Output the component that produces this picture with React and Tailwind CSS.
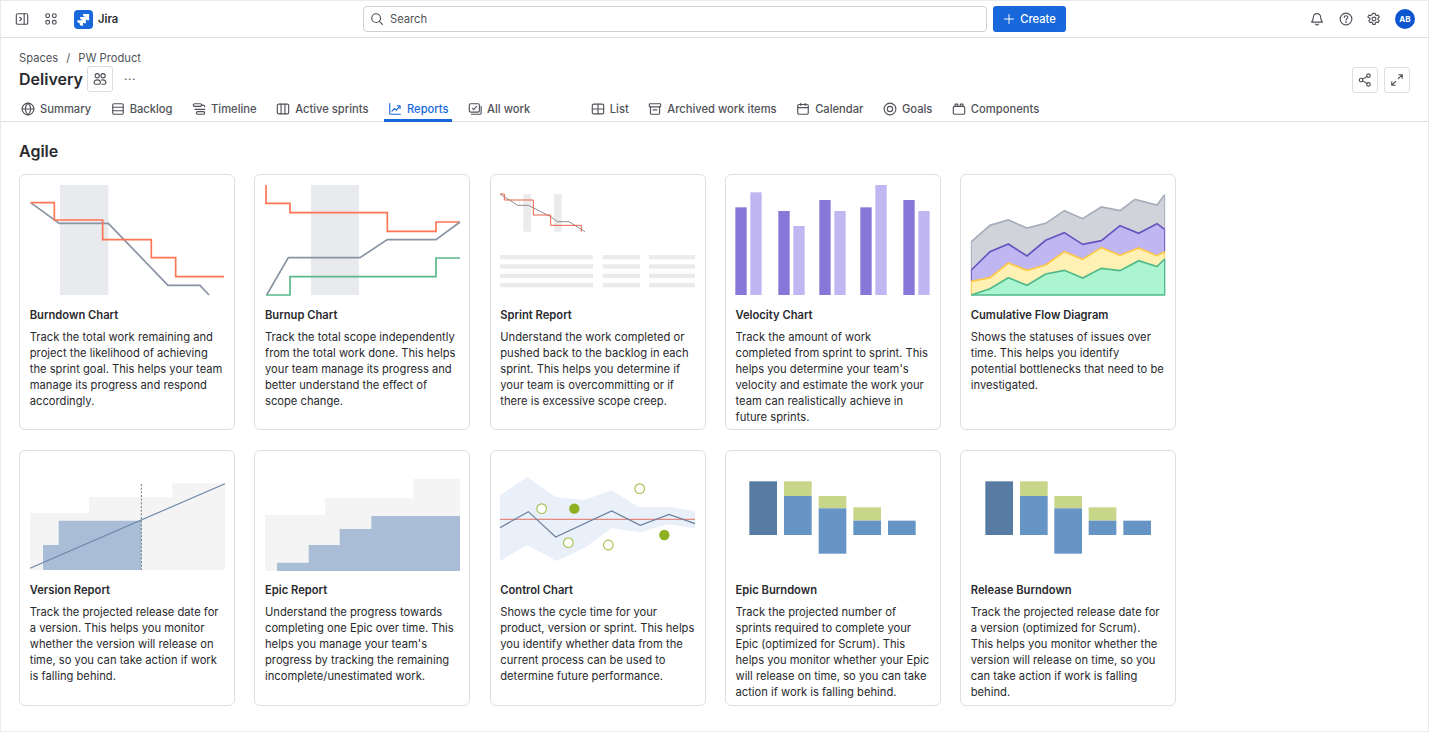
import React from "react";

const Ic = ({ children, size = 16, className = "" }) => (
  <svg width={size} height={size} viewBox="0 0 16 16" fill="none" stroke="currentColor" strokeWidth="1.3" strokeLinecap="round" strokeLinejoin="round" className={"shrink-0 " + className}>{children}</svg>
);

const icons = {
  panel: <><rect x="1.5" y="2" width="13" height="12" rx="1.5" /><path d="M10.5 2v12M5.5 6l2 2-2 2" /></>,
  apps: <><circle cx="4.2" cy="4.2" r="2.2" /><circle cx="11.8" cy="4.2" r="2.2" /><circle cx="4.2" cy="11.8" r="2.2" /><circle cx="11.8" cy="11.8" r="2.2" /></>,
  search: <><circle cx="7" cy="7" r="5" /><path d="M10.7 10.7 14.2 14.2" /></>,
  plus: <path d="M8 2v12M2 8h12" />,
  bell: <><path d="M8 1.8c-2.6 0-4.2 2-4.2 4.5 0 3-1.5 4.2-2 5.2h12.4c-.5-1-2-2.2-2-5.2 0-2.5-1.6-4.5-4.2-4.5z" /><path d="M6.3 13.8c.4.6 1 .9 1.7.9s1.3-.3 1.7-.9" /></>,
  help: <><circle cx="8" cy="8" r="6.7" /><path d="M6 6.2c0-1.1.9-1.9 2-1.9s2 .8 2 1.8c0 1.500-2 1.700-2 3.200" /><circle cx="8" cy="11.5" r=".4" /></>,
  gear: <><circle cx="8" cy="8" r="2.200" /><path d="M6.700 1.500h2.600l.4 1.900 1.200.7 1.800-.6 1.300 2.300-1.400 1.300v1.400l1.400 1.300-1.300 2.300-1.800-.6-1.200.7-.4 1.900H6.700l-.4-1.900-1.200-.7-1.800.6-1.300-2.300 1.400-1.300V7.100L1 5.800l1.300-2.300 1.800.6 1.200-.7z" /></>,
  users: <><circle cx="4.800" cy="4.300" r="2.400" /><circle cx="11.500" cy="4.300" r="2.400" /><path d="M1.300 12.500c0-2 1.500-3.500 3.700-3.500s3.500 1.500 3.500 3.300c0 1-.7 1.700-1.700 1.700H3c-1 0-1.700-.5-1.700-1.500z" /><path d="M9.800 9.200c.5-.2 1-.2 1.500-.2 2 0 3.400 1.400 3.400 3.400 0 1-.7 1.600-1.600 1.600h-3" /></>,
  share: <><circle cx="3.500" cy="8" r="2" /><circle cx="12" cy="3" r="2" /><circle cx="12" cy="13" r="2" /><path d="M5.300 7 10.200 4M5.300 9 10.200 12" /></>,
  expand: <path d="M9.500 6.500 14 2M10 2h4v4M6.500 9.500 2 14M2 10v4h4" />,
  globe: <><circle cx="8" cy="8" r="6.700" /><path d="M1.300 8h13.400" /><path d="M8 1.300c-4 3.800-4 9.600 0 13.400 4-3.800 4-9.600 0-13.400z" /></>,
  backlog: <><rect x="2" y="2" width="12" height="12" rx="1.500" /><path d="M2 6h12M2 10h12" /></>,
  timeline: <><rect x="1.500" y="2" width="9.500" height="3" rx="1.500" /><path d="M11 3.500h1.500c1.300 0 2 .8 2 1.900" /><rect x="5" y="11" width="9.500" height="3" rx="1.500" /><path d="M14.500 8.500H3.500" /></>,
  board: <><rect x="1.500" y="2.500" width="13" height="11" rx="1.500" /><path d="M5.800 2.500v11M10.200 2.500v11" /></>,
  chart: <><path d="M2 1.800V13c0 .6.400 1 1 1h11.200" /><path d="M4.500 10.500 7.300 7.500 9.500 9.300l4-4.500" /><path d="M10.600 4.300h3.200v3" /></>,
  allwork: <><rect x="1.500" y="2" width="11.500" height="9.500" rx="1.500" /><path d="M15 5v7.500c0 .8-.7 1.500-1.500 1.500H4" /><path d="m5 7.300 1.500 1.500L9.800 5" /></>,
  list: <><rect x="1.500" y="2.500" width="13" height="11" rx="1.500" /><path d="M1.500 8h13M8 2.500v11" /></>,
  archive: <><rect x="1.500" y="2" width="13" height="3.500" rx=".8" /><path d="M2.800 5.500V13c0 .6.400 1 1 1h8.400c.6 0 1-.4 1-1V5.500M6 9h4" /></>,
  calendar: <><rect x="2" y="2.800" width="12" height="11.200" rx="1.500" /><path d="M2 6.500h12M5.500 1.500v2.500M10.500 1.500v2.500" /></>,
  goals: <><circle cx="8" cy="8" r="6.700" /><circle cx="8" cy="8" r="3" /></>,
  components: <><rect x="1.500" y="5" width="13" height="9" rx="1.500" /><path d="M3.500 5V2.500h3V5M9.500 5V2.500h3V5" /></>,
};

const I = ({ n, size, className }) => <Ic size={size} className={className}>{icons[n]}</Ic>;

const Tab = ({ icon, label, active, className = "" }) => (
  <div className={"relative flex items-center gap-1 px-[3px] h-[26px] text-[11.2px] font-medium " + (active ? "text-[#1868db] " : "text-[#505258] ") + className}>
    <I n={icon} size={14} className="mx-px" />
    <span>{label}</span>
    {active && <div className="absolute left-0 right-0 bottom-0 h-[3px] bg-[#1868db]" />}
  </div>
);

const Chart = ({ x, y, h = 132, children }) => (
  <svg className="block w-full" style={{ height: h }} viewBox={`${x + 3} ${y + 3} 642 ${h * 3}`} fill="none">{children}</svg>
);

const P = ({ c, w = 5, p }) => <polyline points={p} stroke={c} strokeWidth={w} fill="none" />;
const R = ({ a, b, c, d, f, s }) => <rect x={a} y={b} width={c - a} height={d - b} fill={f} stroke={s} strokeWidth={s ? 2 : 0} />;

const OR = "#ff7452", GR = "#8993a4", GN = "#57b88a";

const Burndown = () => (
  <Chart x={27} y={12}>
    <R a={150} b={45} c={295} d={375} f="#e9eaee" />
    <P c={GR} p="62,98 148,160 295,160 474,346 570,346 597,375" />
    <P c={OR} p="62,98 133,98 133,150 278,150 278,209 424,209 424,263 497,263 497,320 642,320" />
  </Chart>
);
const Burnup = () => (
  <Chart x={732} y={12}>
    <R a={903} b={45} c={1047} d={375} f="#e9eaee" />
    <P c={OR} p="768,45 768,100 840,100 840,128 1132,128 1132,184 1278,184 1278,156 1350,156" />
    <P c={GR} p="770,375 835,263 1050,263 1132,209 1278,209 1350,156" />
    <P c={GN} p="768,375 840,375 840,320 1278,320 1278,264 1350,264" />
  </Chart>
);
const Sprint = () => (
  <Chart x={15} y={12}>
    <R a={115} b={72} c={138} d={185} f="#ebebeb" />
    <R a={207} b={72} c={230} d={185} f="#ebebeb" />
    <P c="#8c8c8c" w={3} p="45,72 98,106 130,106 197,140 217,155 252,155 300,185" />
    <P c="#e8604a" w={3} p="45,72 58,72 58,90 145,90 145,135 197,135 197,166 289,166 289,185" />
    {[255, 283, 311, 339].map((y) => (
      <g key={y}>
        <R a={45} b={y} c={324} d={y + 13} f="#ebebeb" />
        <R a={353} b={y} c={465} d={y + 13} f="#ebebeb" />
        <R a={492} b={y} c={630} d={y + 13} f="#ebebeb" />
      </g>
    ))}
  </Chart>
);
const Velocity = () => (
  <Chart x={15} y={12}>
    {[[46, 112, 1], [91, 67, 0], [175, 123, 1], [220, 168, 0], [298, 90, 1], [343, 123, 0], [421, 112, 1], [466, 45, 0], [550, 90, 1], [595, 123, 0]].map(([a, b, d]) => (
      <R key={a} a={a} b={b} c={a + 34} d={375} f={d ? "#8777d9" : "#c0b6f2"} />
    ))}
  </Chart>
);
const Area = ({ top, f, s }) => (
  <>
    <polygon points={`${top} 629,375 49,375`} fill={f} />
    <polyline points={top} stroke={s} strokeWidth="5" fill="none" />
  </>
);
const Cfd = () => (
  <Chart x={15} y={12}>
    <Area top="49,215 105,166 160,150 216,174 272,160 328,122 383,146 439,111 495,122 540,88 606,105 629,74" f="#d0d3da" s="#a5adba" />
    <polyline points="49,215 49,300" stroke="#a5adba" strokeWidth="3" />
    <polyline points="629,74 629,178" stroke="#a5adba" strokeWidth="3" />
    <Area top="49,300 105,245 160,222 216,258 272,211 328,188 383,223 439,212 495,167 551,190 606,161 629,178" f="#c0b6f2" s="#6554c0" />
    <polyline points="49,300 49,334" stroke="#6554c0" strokeWidth="3" />
    <polyline points="629,178 629,245" stroke="#6554c0" strokeWidth="3" />
    <Area top="49,334 105,323 160,279 216,301 272,285 328,245 383,268 439,233 495,256 551,234 606,257 629,245" f="#fff0b3" s="#ffc847" />
    <polyline points="49,334 49,375" stroke="#ffc847" strokeWidth="3" />
    <polyline points="629,245 629,267" stroke="#ffc847" strokeWidth="3" />
    <Area top="49,375 105,356 160,323 216,346 272,312 328,301 383,324 439,295 495,302 551,272 606,290 629,267" f="#abf5d1" s="#4fb98a" />
    <polyline points="629,267 629,375 49,375" stroke="#4fb98a" strokeWidth="4" />
  </Chart>
);
const Version = () => (
  <Chart x={27} y={-30} h={131}>
    <polygon points="60,330 60,159 237,159 237,111 487,111 487,70 645,70 645,330" fill="#f4f4f4" />
    <polygon points="99,330 99,255 146,255 146,182 394,182 394,330" fill="#a9bdd6" />
    <line x1="394" y1="72" x2="394" y2="330" stroke="#6f7680" strokeWidth="3" strokeDasharray="6 5" />
    <line x1="60" y1="325" x2="645" y2="71" stroke="#6c87a8" strokeWidth="3.500" />
  </Chart>
);
const EpicReport = () => (
  <Chart x={732} y={-30} h={131}>
    <polygon points="765,333 765,165 945,165 945,115 1210,115 1210,57 1350,57 1350,333" fill="#f4f4f4" />
    <polygon points="801,333 801,308 896,308 896,255 989,255 989,207 1084,207 1084,168 1350,168 1350,333" fill="#a9bdd6" />
  </Chart>
);
const Control = () => (
  <Chart x={15} y={-45} h={131}>
    <polygon points="45,90 127,36 212,96 297,105 380,76 460,126 550,126 630,138 630,190 550,178 466,202 380,190 297,250 215,288 127,240 45,288" fill="#e9f0f9" />
    <line x1="45" y1="163" x2="630" y2="163" stroke="#e58a80" strokeWidth="3.500" />
    <P c="#6c7f9c" w={3.500} p="45,188 130,140 212,216 380,138 466,181 552,148 630,176" />
    {[[170, 131], [250, 233], [370, 240], [464, 71]].map(([x, y]) => (
      <circle key={x} cx={x} cy={y} r="14.500" fill="#fff" stroke="#a7c254" strokeWidth="3.500" />
    ))}
    <circle cx="268" cy="131" r="15.500" fill="#8eb021" />
    <circle cx="538" cy="210" r="15.500" fill="#8eb021" />
  </Chart>
);
const Bars = ({ x, y, xs }) => {
  const [a, b, c, d, e] = xs;
  const w = 83;
  const G = "#c8d68a", B = "#6594c5";
  return (
    <Chart x={x} y={y} h={131}>
      <R a={a} b={49} c={a + w} d={210} f="#587ba3" />
      <R a={b} b={49} c={b + w} d={93} f={G} />
      <R a={b} b={93} c={b + w} d={210} f={B} />
      <R a={c} b={93} c={c + w} d={130} f={G} />
      <R a={c} b={130} c={c + w} d={266} f={B} />
      <R a={d} b={127} c={d + w} d={167} f={G} />
      <R a={d} b={167} c={d + w} d={210} f={B} />
      <R a={e} b={167} c={e + w} d={210} f={B} />
    </Chart>
  );
};

const row1 = [
  { c: <Burndown />, t: "Burndown Chart", d: "Track the total work remaining and project the likelihood of achieving the sprint goal. This helps your team manage its progress and respond accordingly." },
  { c: <Burnup />, t: "Burnup Chart", d: "Track the total scope independently from the total work done. This helps your team manage its progress and better understand the effect of scope change." },
  { c: <Sprint />, t: "Sprint Report", d: "Understand the work completed or pushed back to the backlog in each sprint. This helps you determine if your team is overcommitting or if there is excessive scope creep." },
  { c: <Velocity />, t: "Velocity Chart", narrow: true, d: "Track the amount of work completed from sprint to sprint. This helps you determine your team's velocity and estimate the work your team can realistically achieve in future sprints." },
  { c: <Cfd />, t: "Cumulative Flow Diagram", d: "Shows the statuses of issues over time. This helps you identify potential bottlenecks that need to be investigated." },
];
const row2 = [
  { c: <Version />, t: "Version Report", d: "Track the projected release date for a version. This helps you monitor whether the version will release on time, so you can take action if work is falling behind." },
  { c: <EpicReport />, t: "Epic Report", d: "Understand the progress towards completing one Epic over time. This helps you manage your team's progress by tracking the remaining incomplete/unestimated work." },
  { c: <Control />, t: "Control Chart", d: "Shows the cycle time for your product, version or sprint. This helps you identify whether data from the current process can be used to determine future performance." },
  { c: <Bars x={15} y={-45} xs={[88, 192, 296, 400, 504]} />, t: "Epic Burndown", d: "Track the projected number of sprints required to complete your Epic (optimized for Scrum). This helps you monitor whether your Epic will release on time, so you can take action if work is falling behind." },
  { c: <Bars x={720} y={-45} xs={[796, 900, 1003, 1106, 1210]} />, t: "Release Burndown", d: "Track the projected release date for a version (optimized for Scrum). This helps you monitor whether the version will release on time, so you can take action if work is falling behind." },
];

const Card = ({ c, t, d, narrow }) => (
  <div className="h-[256px] border border-[#dddee1] rounded-[6px] bg-white overflow-hidden">
    {c}
    <div className="pl-[9.75px] pr-[9.5px]">
      <div className="text-[11.2px] leading-4 font-semibold text-[#292a2e]">{t}</div>
      <p className={"mt-[6px] text-[11.2px] leading-4 text-[#292a2e] " + (narrow ? "pr-[2px]" : "")}>{d}</p>
    </div>
  </div>
);

const IconBtn = ({ n }) => (
  <div className="w-[26px] h-[26px] flex items-center justify-center border border-[#dddee1] rounded-[3px] text-[#505258]">
    <I n={n} size={14} />
  </div>
);

export default function App() {
  return (
    <div className="h-[732px] w-[1429px] overflow-hidden bg-white border border-[#e9eaec] font-['Inter',sans-serif] text-[#292a2e]">
      <header className="h-[37px] border-b border-[#dddee1] flex items-center relative">
        <div className="flex items-center pl-[14px] text-[#505258]">
          <I n="panel" size={14} />
          <I n="apps" size={14} className="ml-[15px]" />
          <div className="ml-[16px] w-[19px] h-[19px] rounded-[4px] bg-[#1868db] flex items-center justify-center">
            <svg width="15" height="15" viewBox="0 0 24 24" fill="#fff">
              <path d="M11 3h10v10h-2.700c-1.500 0-2.800-1.200-2.800-2.800V7.500h-1.500C12 7.500 11 5.500 11 3z" />
              <path d="M6.500 8h9.300v9.800h-2.500c-1.500 0-2.800-1.200-2.800-2.800v-2.500H9.200C7.500 12.500 6.500 10.500 6.500 8z" />
              <path d="M2 13h9.300v9h-2.500c-1.500 0-2.800-1.200-2.800-2.800v-1.700H4.700C3 17.500 2 15.500 2 13z" />
            </svg>
          </div>
          <span className="ml-[5px] text-[11.2px] font-semibold text-[#292a2e]">Jira</span>
        </div>
        <div className="absolute left-[362px] w-[624px] h-[26px] border border-[#cfd0d4] rounded-[4px] flex items-center pl-[6px] gap-[6px] text-[#505258]">
          <I n="search" size={14} />
          <span className="text-[11.2px]">Search</span>
        </div>
        <div className="absolute left-[992px] w-[73px] h-[26px] rounded-[3px] bg-[#1868db] text-white flex items-center justify-center gap-[5px] text-[11.2px] font-medium">
          <I n="plus" size={12} />
          <span>Create</span>
        </div>
        <div className="ml-auto flex items-center gap-[14px] pr-[13px] text-[#505258]">
          <I n="bell" size={14} className="mr-px" />
          <I n="help" size={14} />
          <I n="gear" size={14} />
          <div className="w-5 h-5 rounded-full bg-[#0c55cf] text-white text-[8px] font-bold flex items-center justify-center">AB</div>
        </div>
      </header>

      <div className="h-[84px] border-b border-[#dddee1]">
        <div className="px-[18px] pt-[12px] flex items-start justify-between h-[58px]">
          <div>
            <div className="text-[11.2px] leading-4 text-[#505258] flex gap-[8px]">
              <span>Spaces</span><span>/</span><span>PW Product</span>
            </div>
            <div className="flex items-center">
              <span className="text-[16px] font-semibold leading-[26px]">Delivery</span>
              <div className="ml-[4px]"><IconBtn n="users" /></div>
              <span className="ml-[11px] text-[12px] text-[#505258] tracking-[0.5px] -mt-[6px]">...</span>
            </div>
          </div>
          <div className="flex gap-[6px] pt-[17px]">
            <IconBtn n="share" />
            <IconBtn n="expand" />
          </div>
        </div>
        <nav className="flex items-center gap-[12.5px] pl-4">
          <Tab icon="globe" label="Summary" />
          <Tab icon="backlog" label="Backlog" />
          <Tab icon="timeline" label="Timeline" />
          <Tab icon="board" label="Active sprints" />
          <Tab icon="chart" label="Reports" active />
          <Tab icon="allwork" label="All work" />
          <Tab icon="list" label="List" className="ml-[41px]" />
          <Tab icon="archive" label="Archived work items" />
          <Tab icon="calendar" label="Calendar" />
          <Tab icon="goals" label="Goals" />
          <Tab icon="components" label="Components" />
        </nav>
      </div>

      <main className="px-[18px]">
        <h2 className="text-[16px] leading-5 font-semibold mt-[19px] mb-[13px]">Agile</h2>
        <div className="grid grid-cols-[repeat(5,216px)] gap-x-[19.25px] gap-y-5">
          {[...row1, ...row2].map((x) => <Card key={x.t} {...x} />)}
        </div>
      </main>
    </div>
  );
}
